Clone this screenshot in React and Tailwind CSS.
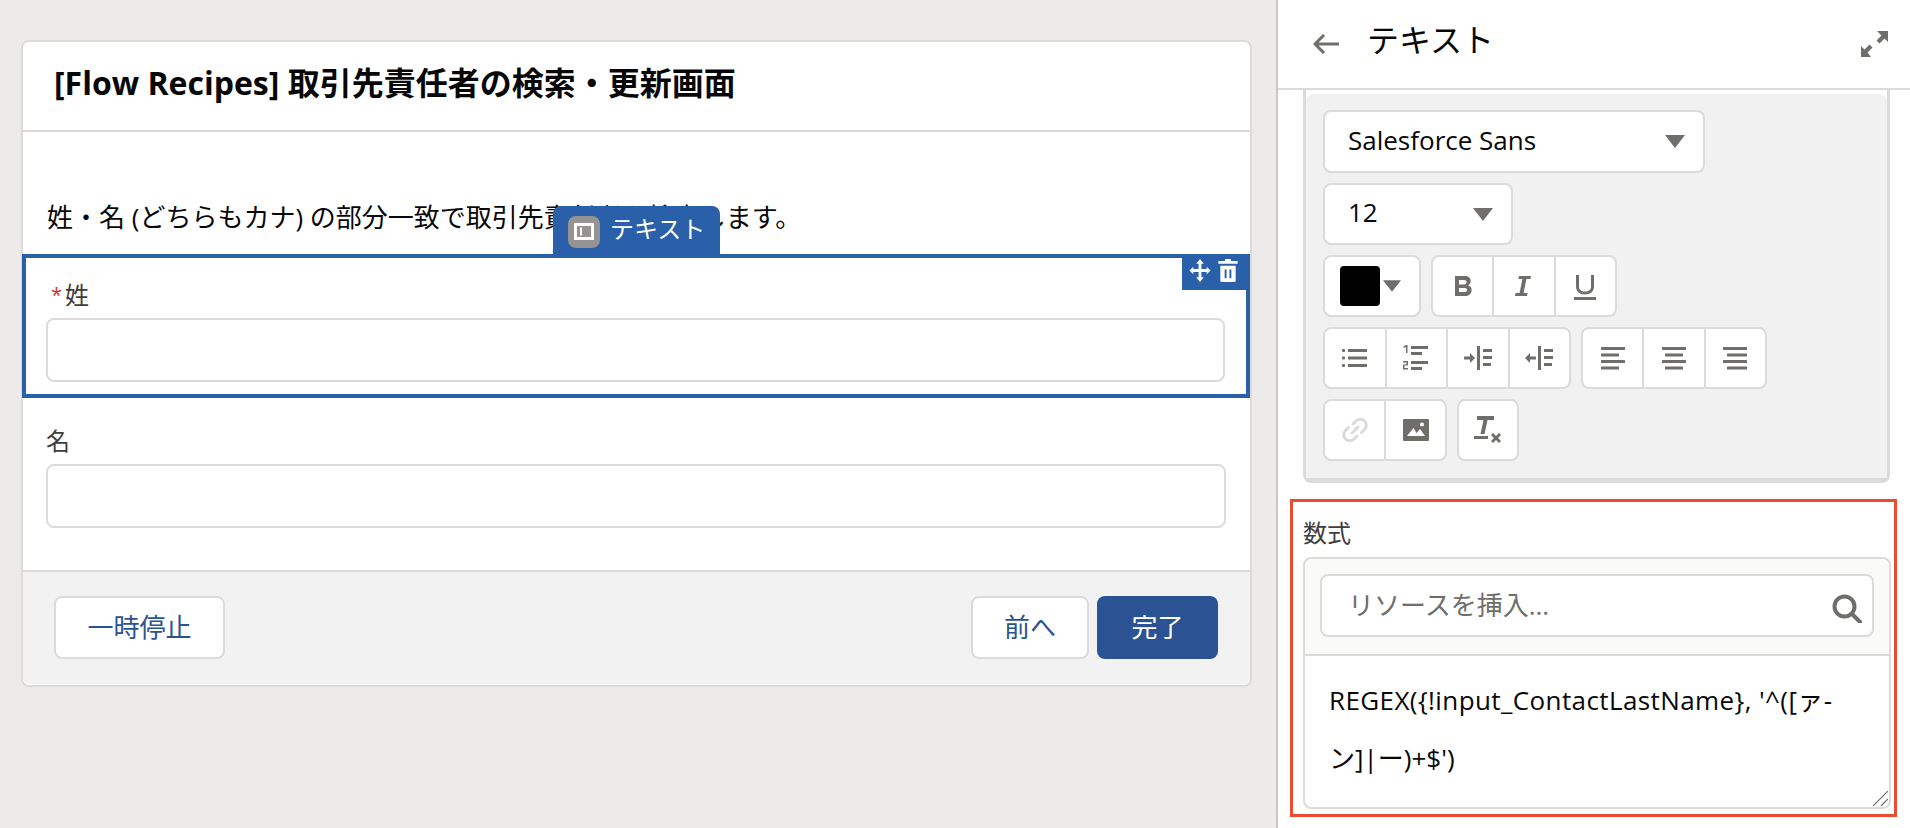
import React from "react";

const Caret = ({ small }) => (
  <svg viewBox="0 0 20 13" className={small ? "w-[18px] h-[12px]" : "w-[20px] h-[13px]"}>
    <path d="M0 0H20L10 13Z" fill="#706e6b" />
  </svg>
);

const Ico = ({ w = 28, h = 28, vb = "0 0 28 28", children }) => (
  <svg width={w} height={h} viewBox={vb} fill="#706e6b" stroke="none">
    {children}
  </svg>
);

const Bars = ({ rows }) => (
  <Ico>
    {rows.map(([x, y, w], i) => (
      <rect key={i} x={x} y={y} width={w} height="3" rx="0.5" />
    ))}
  </Ico>
);

const Cell = ({ children, first }) => (
  <div className={`flex-1 flex items-center justify-center ${first ? "" : "border-l-2 border-[#dddbda]"}`}>
    {children}
  </div>
);

const Group = ({ width, items }) => (
  <div className={`flex h-[62px] bg-white border-2 border-[#dddbda] rounded-lg ${width}`}>
    {items.map((item, i) => (
      <Cell key={i} first={i === 0}>
        {item}
      </Cell>
    ))}
  </div>
);

const boldIcon = (
  <Ico>
    <path d="M6 4h9.500c4 0 6.200 2 6.200 5 0 2-1 3.500-2.600 4.200 2.200.6 3.500 2.300 3.500 4.700 0 3.600-2.600 6.100-6.800 6.100H6ZM10 8v4.500h5c1.500 0 2.500-.8 2.500-2.200S16.500 8 15 8Zm0 8v4h5.500c1.600 0 2.700-.8 2.700-2s-1.100-2-2.700-2Z" fillRule="evenodd" />
  </Ico>
);
const italicIcon = (
  <Ico>
    <path d="M9 4h12l-.6 3h-4l-2.800 14h4l-.6 3H5l.6-3h4l2.800-14h-4Z" />
  </Ico>
);
const underlineIcon = (
  <Ico>
    <path d="M5 3h3v11.500c0 3.200 2.200 5 6 5s6-1.800 6-5V3h3v11.500c0 5-3.500 8-9 8s-9-3-9-8Z" />
    <rect x="3" y="25" width="22" height="3" />
  </Ico>
);
const ulIcon = (
  <Ico>
    <rect x="1" y="5" width="3" height="3" rx="1" />
    <rect x="1" y="12.500" width="3" height="3" rx="1" />
    <rect x="1" y="20" width="3" height="3" rx="1" />
    <rect x="7" y="5" width="19" height="3" />
    <rect x="7" y="12.500" width="19" height="3" />
    <rect x="7" y="20" width="19" height="3" />
  </Ico>
);
const olIcon = (
  <Ico>
    <path d="M1.500 2.500 4 1h1.500v8H4V3L1.500 4ZM1 17h5v4.500H2.500V24H6v1.500H1v-5h3.500v-2H1Z" />
    <rect x="9" y="2" width="17" height="3" />
    <rect x="9" y="8" width="11" height="3" />
    <rect x="9" y="17" width="17" height="3" />
    <rect x="9" y="23" width="11" height="3" />
  </Ico>
);
const indentIcon = (
  <Ico>
    <path d="M0 12.500h6V9l5 5-5 5v-3.500H0Z" />
    <rect x="13" y="2" width="3" height="24" />
    <rect x="19" y="5" width="9" height="3" />
    <rect x="19" y="12" width="9" height="3" />
    <rect x="19" y="19" width="8" height="3" />
  </Ico>
);
const outdentIcon = (
  <Ico>
    <path d="M11 12.500H5V9l-5 5 5 5v-3.500h6Z" />
    <rect x="13" y="2" width="3" height="24" />
    <rect x="19" y="5" width="9" height="3" />
    <rect x="19" y="12" width="9" height="3" />
    <rect x="19" y="19" width="8" height="3" />
  </Ico>
);
const linkIcon = (
  <svg width="28" height="28" viewBox="0 0 28 28" fill="none" stroke="#dddbda" strokeWidth="3" strokeLinecap="round">
    <path d="M11 17l6-6" />
    <path d="M12 8l3-3a6 6 0 0 1 8.500 8.500l-3 3" />
    <path d="M16 20l-3 3a6 6 0 0 1-8.500-8.500l3-3" />
  </svg>
);
const imageIcon = (
  <Ico>
    <path
      fillRule="evenodd"
      d="M2 3h24a1 1 0 0 1 1 1v20a1 1 0 0 1-1 1H2a1 1 0 0 1-1-1V4a1 1 0 0 1 1-1Zm3 17h18l-5-7-3.500 4-3-5Zm15-13.500a2 2 0 1 0 0 4 2 2 0 0 0 0-4Z"
    />
  </Ico>
);
const clearIcon = (
  <Ico w={30} h={30} vb="0 0 30 30">
    <path d="M4 1h17v4h-6.500l-3 14H7.500l3-14H4Z" />
    <rect x="1" y="21" width="14" height="3" />
    <path d="M18 20l2-2 3 3 3-3 2 2-3 3 3 3-2 2-3-3-3 3-2-2 3-3Z" />
  </Ico>
);

const Select = ({ label, className }) => (
  <div className={`flex items-center justify-between bg-white border-2 border-[#dddbda] rounded-lg pl-[23px] pr-[18px] ${className}`}>
    <span className="text-[26px] text-[#080707] leading-none mb-[4px]">{label}</span>
    <Caret />
  </div>
);

const Editor = () => (
  <div className="mx-[25px] w-[587px] border-x-[3px] border-b-[5px] border-[#dddbda] rounded-b-lg pt-[4px] bg-white">
    <div className="bg-[#f1f1f1] rounded-t-lg px-[17px] pt-[16px] pb-[17px] flex flex-col gap-[10px]">
      <Select label="Salesforce Sans" className="w-[382px] h-[63px]" />
      <Select label="12" className="w-[190px] h-[62px]" />
      <div className="flex gap-[10px]">
        <div className="flex items-center justify-between w-[98px] h-[62px] bg-white border-2 border-[#dddbda] rounded-lg pl-[15px] pr-[18px]">
          <div className="w-[40px] h-[40px] bg-black rounded-[4px]"></div>
          <Caret small />
        </div>
        <Group width="w-[186px]" items={[boldIcon, italicIcon, underlineIcon]} />
      </div>
      <div className="flex gap-[10px]">
        <Group width="w-[248px]" items={[ulIcon, olIcon, indentIcon, outdentIcon]} />
        <Group
          width="w-[186px]"
          items={[
            <Bars rows={[[2, 3, 24], [2, 9.500, 18], [2, 16, 24], [2, 22.500, 18]]} />,
            <Bars rows={[[2, 3, 24], [5, 9.500, 18], [2, 16, 24], [5, 22.500, 18]]} />,
            <Bars rows={[[2, 3, 24], [6, 9.500, 20], [2, 16, 24], [6, 22.500, 20]]} />,
          ]}
        />
      </div>
      <div className="flex gap-[10px]">
        <Group width="w-[124px]" items={[linkIcon, imageIcon]} />
        <Group width="w-[62px]" items={[clearIcon]} />
      </div>
    </div>
  </div>
);

const FormulaBox = () => (
  <div className="mt-[16px] ml-[12px] w-[607px] border-[3px] border-[#ea4c2e] px-[10px] pt-[16px] pb-[5px]">
    <div className="text-[24px] leading-[30px] text-[#3e3e3c] mb-[9px]">数式</div>
    <div className="w-[588px] h-[252px] border-2 border-[#dddbda] rounded-lg flex flex-col">
      <div className="h-[97px] shrink-0 bg-[#fafaf9] rounded-t-lg border-b-2 border-[#dddbda] px-[15px] pt-[15px]">
        <div className="relative h-[63px]">
          <input
            placeholder="リソースを挿入..."
            className="w-full h-full bg-white border-2 border-[#dddbda] rounded-lg pl-[26px] pr-[50px] pb-[2px] text-[26px] placeholder:text-[#706e6b] outline-none"
          />
          <svg
            width="30"
            height="29"
            viewBox="0 0 30 29"
            fill="none"
            stroke="#706e6b"
            strokeWidth="4"
            className="absolute right-[12px] top-[20px]"
          >
            <circle cx="12.500" cy="12.500" r="10" />
            <path d="M20 20l8 8" strokeLinecap="round" />
          </svg>
        </div>
      </div>
      <div className="relative flex-1 pl-[24px] pt-[15px] text-[26px] leading-[58px] text-[#080707]">
        <span className="tracking-[0.4px]">REGEX({"{"}!input_ContactLastName{"}"}, '^([ァ-</span>
        <br />
        ン]|ー)+$')
        <svg
          width="15"
          height="15"
          viewBox="0 0 15 15"
          fill="none"
          stroke="#706e6b"
          strokeWidth="1.200"
          className="absolute right-[1px] bottom-[1px]"
        >
          <path d="M0 15L15 0M8 15L15 8" />
        </svg>
      </div>
    </div>
  </div>
);

const Field = ({ label, required }) => (
  <>
    <div className="h-[36px] mb-[5px] flex items-center text-[24px] text-[#3e3e3c]">
      {required && <span className="text-[#c23934] w-[14px] text-[20px] ml-[5px]">*</span>}
      {label}
    </div>
    <input className="block w-full h-[64px] bg-white border-2 border-[#dddbda] rounded-lg outline-none" />
  </>
);

const Canvas = () => (
  <div className="w-[1276px] shrink-0 pt-[40px] pl-[21px]">
    <div className="w-[1231px] bg-white border-2 border-[#dddbda] rounded-lg pb-[1px]">
      <div className="h-[90px] border-b-2 border-[#dddbda] flex items-center pl-[31px] pb-[6px] text-[32px] font-bold text-[#080707]">
        [Flow Recipes] 取引先責任者の検索・更新画面
      </div>
      <div className="pt-[67px]">
        <div className="pl-[24px] mb-[19px] h-[36px] flex items-center text-[26px] text-[#080707]">
          姓・名 (どちらもカナ) の部分一致で取引先責任者を検索します。
        </div>
        <div className="relative -ml-[1px] border-4 border-[#2a5fa9] pl-[20px] pr-[21px] pt-[19px] pb-[12px]">
          <div className="absolute left-[527px] -top-[52px] w-[167px] h-[52px] bg-[#2a5fa9] rounded-t-lg flex items-center pl-[15px] pb-[6px] gap-[10px] text-white text-[24px]">
            <div className="w-[32px] h-[32px] mt-[5px] rounded-lg bg-[#969492] flex items-center justify-center">
              <svg width="20" height="17" viewBox="0 0 20 17" fill="none" stroke="#fff">
                <rect x="1.500" y="1.500" width="17" height="14" strokeWidth="3" />
                <path d="M7 4.500v8" strokeWidth="2" />
              </svg>
            </div>
            テキスト
          </div>
          <div className="absolute right-0 top-0 w-[64px] h-[32px] bg-[#2a5fa9] flex items-start pl-[7px] pt-[1px] gap-[7px]">
            <svg width="22" height="23" viewBox="0 0 22 24" fill="#fff">
              <path d="M11 0l4 5h-2.500v5.500H18V8l4 4-4 4v-2.500h-5.500V19H15l-4 5-4-5h2.500v-5.500H4V16l-4-4 4-4v2.500h5.500V5H7Z" />
            </svg>
            <svg width="20" height="23" viewBox="0 0 20 24" fill="#fff">
              <path d="M7 0h6v2h7v3H0V2h7Z" />
              <path fillRule="evenodd" d="M2 7h16v16a1 1 0 0 1-1 1H3a1 1 0 0 1-1-1Zm4.500 4v9h2v-9Zm5 0v9h2v-9Z" />
            </svg>
          </div>
          <Field label="姓" required />
        </div>
        <div className="pl-[23px] pr-[24px] pt-[25px] pb-[42px]">
          <Field label="名" />
        </div>
      </div>
      <div className="border-t-2 border-[#dddbda] bg-[#f3f2f2] pt-[24px] pb-[25px] pl-[31px] pr-[32px] flex justify-between text-[26px] rounded-b-md">
        <button className="w-[171px] h-[63px] bg-white border-2 border-[#dddbda] rounded-lg text-[#2b5393]">
          一時停止
        </button>
        <div className="flex gap-[8px]">
          <button className="w-[118px] h-[63px] bg-white border-2 border-[#dddbda] rounded-lg text-[#2b5393]">
            前へ
          </button>
          <button className="w-[121px] h-[63px] bg-[#2b5393] rounded-lg text-white">完了</button>
        </div>
      </div>
    </div>
  </div>
);

const SidePanel = () => (
  <div className="flex-1 bg-white border-l-2 border-[#c9c7c5]">
    <div className="h-[90px] border-b-2 border-[#dddbda] flex items-center pl-[35px] pr-[27px]">
      <svg width="26" height="20" viewBox="0 0 26 20" fill="none" stroke="#706e6b" strokeWidth="3">
        <path d="M26 10H2M11 1l-9 9 9 9" />
      </svg>
      <span className="ml-[28px] text-[32px] leading-none text-[#080707] pb-[8px]">テキスト</span>
      <svg width="27" height="26" viewBox="0 0 27 26" fill="#706e6b" className="ml-auto">
        <path d="M16 0h11v11l-3.500-3.500-5 5-3-3 5-5ZM0 26V15l3.500 3.500 5-5 3 3-5 5L10 26Z" />
      </svg>
    </div>
    <Editor />
    <FormulaBox />
  </div>
);

export default function App() {
  return (
    <div className="flex w-[1910px] h-[828px] overflow-hidden bg-[#ecebea] font-['Open_Sans','Noto_Sans_CJK_JP',sans-serif]">
      <Canvas />
      <SidePanel />
    </div>
  );
}
